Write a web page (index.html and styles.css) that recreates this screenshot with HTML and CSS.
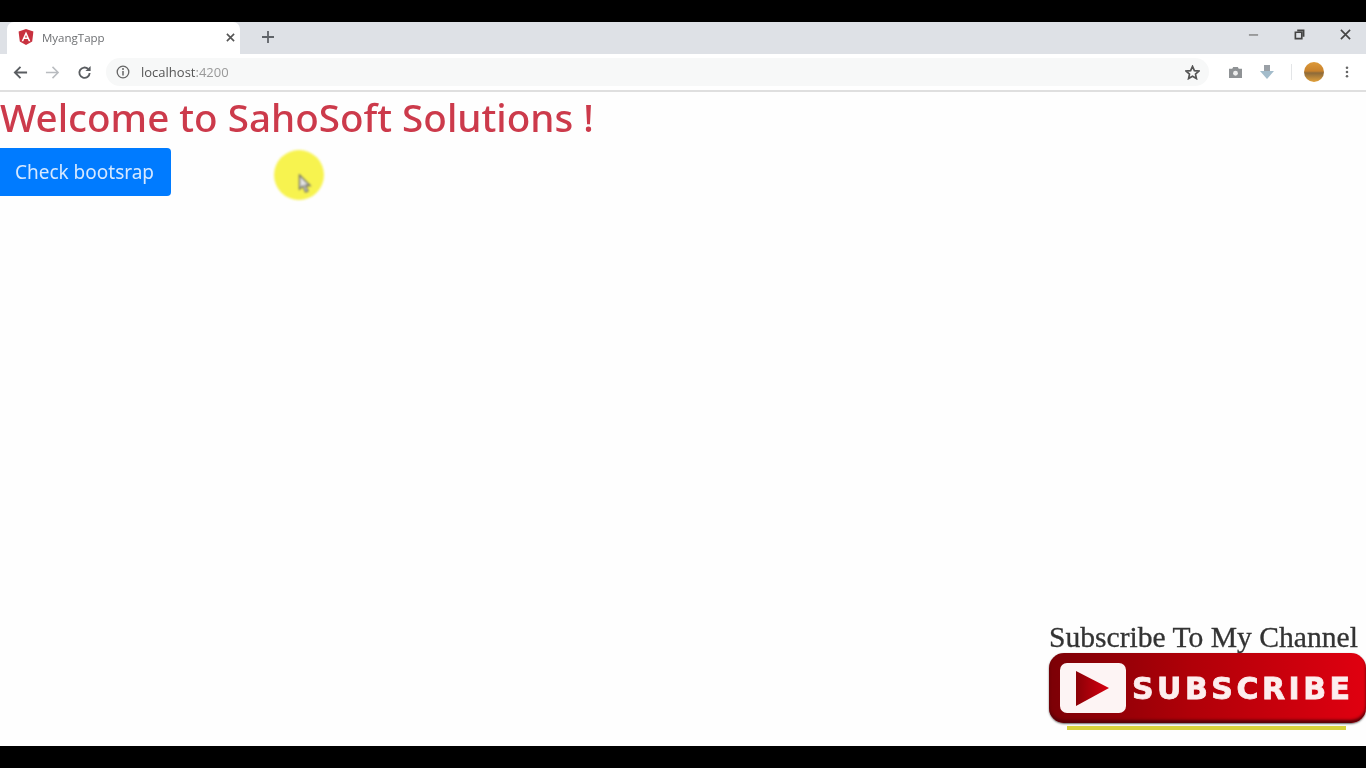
FILE: index.html
```html
<!doctype html>
<html>
<head>
<meta charset="utf-8">
<title>MyangTapp</title>
<link rel="stylesheet" href="styles.css">
</head>
<body>
<div class="screen">
	<div class="tabstrip">
		<div class="tab">
			<svg class="favicon" viewBox="0 0 16 16"><path d="M8 0 .6 2.6l1.2 9.800L8 16l6.200-3.600 1.200-9.800z" fill="#c8313f"/><path d="M8 2.600 3.600 12.200h1.700l.9-2.200h3.600l.9 2.200h1.700zM7 8.500 8 6l1 2.500z" fill="#fff"/></svg>
			<span class="tab-title">MyangTapp</span>
			<svg class="tab-close" viewBox="0 0 10 10"><path d="M1 1l8 8M9 1l-8 8" stroke="#555" stroke-width="1.800"/></svg>
		</div>
		<svg class="newtab" viewBox="0 0 12 12"><path d="M6 0v12M0 6h12" stroke="#5f6368" stroke-width="1.800"/></svg>
		<div class="winbtns">
			<svg viewBox="0 0 12 12"><path d="M1 6.500h10" stroke="#777" stroke-width="1.400"/></svg>
			<svg viewBox="0 0 12 12"><path d="M3.500 1.500h7v7M1.500 3.500h7v7h-7z" fill="none" stroke="#444" stroke-width="1.800"/></svg>
			<svg viewBox="0 0 12 12"><path d="M1 1l10 10M11 1 1 11" stroke="#444" stroke-width="1.800"/></svg>
		</div>
	</div>
	<div class="toolbar">
		<svg class="nav" viewBox="0 0 16 16"><path d="M15 8H2M8 2 2 8l6 6" fill="none" stroke="#5a5d61" stroke-width="2"/></svg>
		<svg class="nav" viewBox="0 0 16 16"><path d="M1 8h13M8 2l6 6-6 6" fill="none" stroke="#b9bcc0" stroke-width="1.600"/></svg>
		<svg class="nav" viewBox="0 0 16 16"><path d="M13.500 8.500a5.500 5.500 0 1 1-1.600-4.200" fill="none" stroke="#5a5d61" stroke-width="2"/><path d="M14.500 1v5.500H9z" fill="#5a5d61"/></svg>
		<div class="omnibox">
			<svg class="info" viewBox="0 0 14 14"><circle cx="7" cy="7" r="5.800" fill="none" stroke="#666" stroke-width="1.300"/><path d="M7 6v4.500" stroke="#666" stroke-width="1.500"/><circle cx="7" cy="4" r="1" fill="#666"/></svg>
			<span class="url">localhost<span class="port">:4200</span></span>
			<svg class="star" viewBox="0 0 16 16"><path d="M8 1.500l2 4.500 4.800.5-3.600 3.200 1 4.800L8 12.100l-4.200 2.400 1-4.800L1.200 6.500 6 6z" fill="none" stroke="#555" stroke-width="1.800"/></svg>
		</div>
		<div class="extensions">
			<svg class="ext-camera" viewBox="0 0 16 14"><path d="M1 3h3.500l1-2h5l1 2H15v10H1z" fill="#8f9295"/><circle cx="8" cy="7.800" r="2.600" fill="#eee"/></svg>
			<svg class="ext-down" viewBox="0 0 16 16"><path d="M5 1h6v6h4l-7 8-7-8h4z" fill="#a3bccb"/><path d="M5 1h6v6H5z" fill="#9aa0a6"/></svg>
			<span class="sep"></span>
			<span class="avatar"></span>
			<svg class="dots" viewBox="0 0 4 14"><circle cx="2" cy="2" r="1.500" fill="#666"/><circle cx="2" cy="7" r="1.500" fill="#666"/><circle cx="2" cy="12" r="1.500" fill="#666"/></svg>
		</div>
	</div>
	<div class="page">
		<h1 class="welcome">Welcome to SahoSoft Solutions !</h1>
		<button class="btn-check">Check bootsrap</button>

		<div class="pointer">
			<svg viewBox="0 0 14 20"><path d="M1.500 1v14l3.500-3 2.500 6 2.500-1-2.500-5.500h4.500z" fill="#e4e4e4" stroke="#6a6a6a" stroke-width="1.300"/></svg>
		</div>

		<div class="subscribe">
			<div class="sub-caption">Subscribe To My Channel</div>
			<div class="sub-button">
				<div class="play-box">
					<svg viewBox="0 0 40 40"><defs><linearGradient id="pl"><stop offset="0" stop-color="#8a0006"/><stop offset="1" stop-color="#d80010"/></linearGradient></defs><path d="M5 3 38 20 5 38z" fill="url(#pl)"/></svg>
				</div>
				<span class="sub-text">SUBSCRIBE</span>
			</div>
			<div class="sub-shadow"></div>
		</div>
	</div>
</div>
</body>
</html>
```

FILE: styles.css
```css
*{margin:0;padding:0;box-sizing:border-box;}
html,body{height:100%;overflow:hidden;background:#000;}
.screen{width:1366px;height:768px;padding:22px 0;display:flex;flex-direction:column;font-family:"Open Sans","Noto Sans",sans-serif;}

.tabstrip{height:32px;background:#dee1e6;display:flex;align-items:center;padding-left:7px;flex:none;}
.tab{width:233px;height:32px;background:#fff;border-radius:7px 7px 0 0;display:flex;align-items:center;padding:0 5px 2px 11px;filter:blur(.6px);}
.favicon{width:16px;height:16px;flex:none;}
.tab-title{margin-left:8px;font-size:11.500px;color:#6d6f72;flex:1;}
.tab-close{width:9px;height:9px;}
.newtab{width:12px;height:12px;margin:-2px 0 0 22px;filter:blur(.6px);}
.winbtns{margin-left:auto;display:flex;gap:35px;padding:0 15px 8px 0;filter:blur(.6px);}
.winbtns svg{width:11px;height:11px;}

.toolbar{height:38px;background:#fff;display:flex;align-items:center;padding:0 13px 0;flex:none;border-bottom:2px solid #dfdfdf;filter:blur(.6px);}
.nav{width:15px;height:15px;margin-right:17px;}
.nav:last-of-type{margin-right:14px;}
.omnibox{width:1103px;height:28px;border-radius:14px;display:flex;align-items:center;padding:0 10px;flex:none;background:#f7f8f8;}
.info{width:14px;height:14px;}
.url{margin:0 0 0 11px;font-size:13px;color:#555;flex:1;}
.port{color:#999;}
.star{width:15px;height:15px;margin-right:-1px;}
.extensions{display:flex;align-items:center;margin-left:19px;}
.ext-camera{width:15px;height:13px;}
.ext-down{width:16px;height:16px;margin-left:16px;}
.sep{width:1px;height:16px;background:#e3e5e7;margin-left:16px;}
.avatar{width:20px;height:20px;border-radius:50%;margin-left:12px;background:linear-gradient(#dd9a3a,#c9822c 45%,#8d6a3a 55%,#e3a13a);}
.dots{width:4px;height:12px;margin-left:21px;}

.page{flex:1;background:#fefefe;position:relative;overflow:hidden;padding-top:1px;}
.welcome{font-size:38.600px;font-weight:500;line-height:48px;color:#cc3a4b;margin-bottom:7px;font-family:"Noto Sans","Open Sans",sans-serif;filter:blur(.6px);}
.btn-check{display:block;width:171px;height:48px;background:#007bff;border:0;border-radius:0 4px 4px 0;color:#d5e8ff;font-size:19px;padding-right:2px;font-family:"Noto Sans",sans-serif;filter:blur(.6px);}

.pointer{position:absolute;left:274px;top:58px;width:50px;height:50px;border-radius:50%;background:#f7f34f;filter:blur(.8px);}
.pointer svg{position:absolute;left:24px;top:24px;width:14px;height:20px;}

.subscribe{position:absolute;left:1049px;top:528px;width:317px;filter:blur(.6px);}
.sub-caption{font-family:"Liberation Serif",serif;font-size:29.600px;line-height:33px;color:#333;white-space:nowrap;position:relative;top:1px;-webkit-text-stroke:.3px #333;}
.sub-button{height:70px;border-radius:15px;background:linear-gradient(90deg,#7c0006,#b00008 45%,#e00010);box-shadow:inset 0 -3px 3px #5a0008,0 1px 2px #666;display:flex;align-items:center;padding-left:11px;position:relative;z-index:1;}
.play-box{width:66px;height:50px;background:#fdf4f4;border-radius:7px;display:flex;align-items:center;padding-left:11px;}
.play-box svg{width:40px;height:40px;}
.sub-text{font-family:"DejaVu Sans",sans-serif;font-weight:700;font-size:30px;letter-spacing:3.500px;color:#fdeeee;margin-left:6px;-webkit-text-stroke:.8px #fdeeee;}
.sub-shadow{height:4px;width:279px;margin:3px 0 0 18px;background:#d8d23c;}
```
